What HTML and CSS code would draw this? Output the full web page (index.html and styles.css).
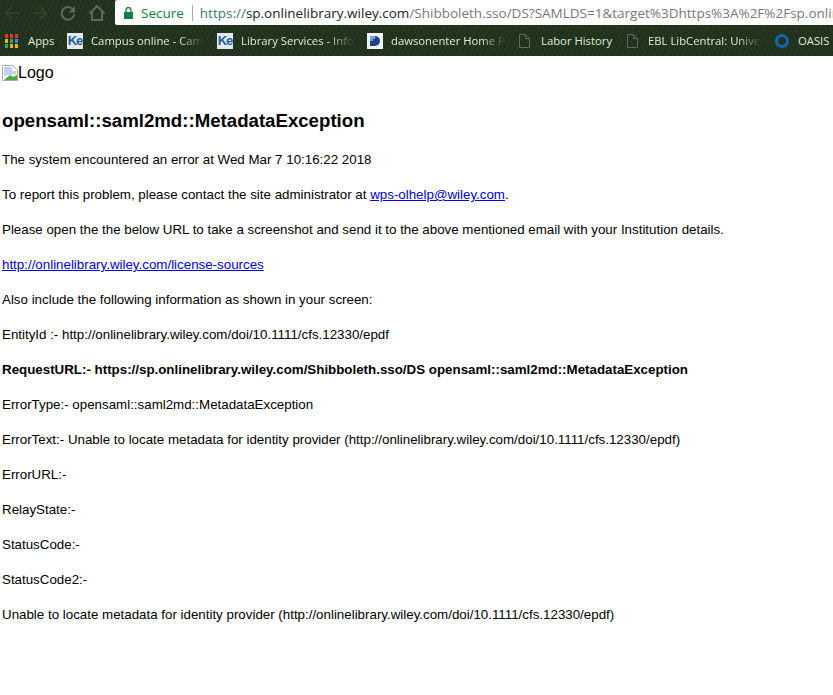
FILE: index.html
```html
<!DOCTYPE html>
<html lang="en">
<head>
<meta charset="utf-8">
<title>MetadataException</title>
<link rel="stylesheet" href="styles.css">
</head>
<body>
<header class="chrome">
  <div class="toolbar">
    <div class="nav">
      <svg class="nav-icon" width="16" height="16" viewBox="0 0 16 16"><path d="M15 8H2M8 2L2 8l6 6" fill="none" stroke="#34452f" stroke-width="1.500"/></svg>
      <svg class="nav-icon" width="16" height="16" viewBox="0 0 16 16"><path d="M1 8h13M8 2l6 6-6 6" fill="none" stroke="#34452f" stroke-width="1.500"/></svg>
      <svg class="nav-icon" width="16" height="16" viewBox="0 0 16 16"><path d="M13 4.500A6.300 6.300 0 1 0 14.300 9" fill="none" stroke="#62665f" stroke-width="2"/><path d="M15 1v6.500H8.500z" fill="#62665f"/></svg>
      <svg class="nav-icon" width="18" height="18" viewBox="0 0 18 18"><path d="M1.500 9.500L9 2l7.500 7.500M4 8v8h10V8" fill="none" stroke="#62665f" stroke-width="2"/></svg>
    </div>
    <div class="omnibox">
      <svg class="lock" width="9" height="12" viewBox="0 0 9 12"><path d="M0 5h9v7H0z" fill="#0b8043"/><path d="M2 5V3a2.500 2.500 0 0 1 5 0v2" fill="none" stroke="#0b8043" stroke-width="1.300"/></svg>
      <span class="secure">Secure</span>
      <span class="divider"></span>
      <span class="url"><span class="scheme">https://</span><span class="host">sp.onlinelibrary.wiley.com</span>/Shibboleth.sso/DS?SAMLDS=1&amp;target%3Dhttps%3A%2F%2Fsp.onlinelibrary.wiley.com</span>
    </div>
  </div>
  <nav class="bookmarks">
    <div class="bm bm-apps">
      <svg width="13" height="14" viewBox="0 0 13 14"><path fill="#e0392b" d="M0 0h3v4H0zM5 0h3v4H5zM10 0h3v4h-3z"/><path fill="#f4b400" d="M0 5h3v4H0z"/><path fill="#34a853" d="M5 5h3v4H5z"/><path fill="#4285f4" d="M10 5h3v4h-3z"/><path fill="#34a853" d="M0 10h3v4H0z"/><path fill="#f4b400" d="M5 10h3v4H5zM10 10h3v4h-3z"/></svg>
      <span>Apps</span>
    </div>
    <div class="bm bm-campus">
      <span class="ke">Ke</span><span class="bm-label">Campus online - Campus</span>
    </div>
    <div class="bm bm-library">
      <span class="ke">Ke</span><span class="bm-label">Library Services - Information</span>
    </div>
    <div class="bm bm-dawson">
      <svg width="16" height="16" viewBox="0 0 16 16"><path fill="#f4f6fa" d="M0 0h16v16H0z"/><path fill="#6fa8d8" d="M3 3h5v10H3z"/><path fill="#1d3f8f" d="M6 6h2a5 5 0 0 0 0-3 5 5 0 0 1 0 10H3V8h3z"/></svg>
      <span class="bm-label">dawsonenter Home Page</span>
    </div>
    <div class="bm bm-labor">
      <svg width="11" height="14" viewBox="0 0 11 14"><path d="M.5.500h6l4 4v9H.5zM6.500.500v4h4" fill="none" stroke="#62665f"/></svg>
      <span>Labor History</span>
    </div>
    <div class="bm bm-ebl">
      <svg width="11" height="14" viewBox="0 0 11 14"><path d="M.5.500h6l4 4v9H.5zM6.500.500v4h4" fill="none" stroke="#62665f"/></svg>
      <span class="bm-label">EBL LibCentral: University</span>
    </div>
    <div class="bm bm-oasis">
      <svg width="14" height="14" viewBox="0 0 14 14"><circle cx="7" cy="7" r="5.500" fill="none" stroke="#1565b0" stroke-width="3"/></svg>
      <span>OASIS</span>
    </div>
  </nav>
</header>
<main class="page">
  <div class="logo"><svg width="16" height="16" viewBox="0 0 16 16"><path d="M.5.500h10l5 5v10H.5z" fill="#fff" stroke="#a9a9a9"/><path d="M2 2h8v4h4v3L2 11z" fill="#bcd0f0"/><path d="M2 15l6-5 3 2 4-2v5z" fill="#4fa83d"/></svg><span>Logo</span></div>
  <h1>opensaml::saml2md::MetadataException</h1>
  <p>The system encountered an error at Wed Mar 7 10:16:22 2018</p>
  <p>To report this problem, please contact the site administrator at <a href="#">wps-olhelp@wiley.com</a>.</p>
  <p>Please open the the below URL to take a screenshot and send it to the above mentioned email with your Institution details.</p>
  <p><a href="#">http://onlinelibrary.wiley.com/license-sources</a></p>
  <p>Also include the following information as shown in your screen:</p>
  <p>EntityId :- http://onlinelibrary.wiley.com/doi/10.1111/cfs.12330/epdf</p>
  <p><strong>RequestURL:- https://sp.onlinelibrary.wiley.com/Shibboleth.sso/DS opensaml::saml2md::MetadataException</strong></p>
  <p>ErrorType:- opensaml::saml2md::MetadataException</p>
  <p>ErrorText:- Unable to locate metadata for identity provider (http://onlinelibrary.wiley.com/doi/10.1111/cfs.12330/epdf)</p>
  <p>ErrorURL:-</p>
  <p>RelayState:-</p>
  <p>StatusCode:-</p>
  <p>StatusCode2:-</p>
  <p>Unable to locate metadata for identity provider (http://onlinelibrary.wiley.com/doi/10.1111/cfs.12330/epdf)</p>
</main>
</body>
</html>
```
FILE: styles.css
```css
html, body {
  margin: 0;
  padding: 0;
  background: #fff;
  overflow: hidden;
}
body {
  width: 833px;
  height: 695px;
  font-family: "Liberation Sans", Arial, sans-serif;
  color: #000;
}
.chrome {
  height: 56px;
  background-color: #22331d;
  background-image:
    repeating-linear-gradient(63deg, rgba(255,255,255,.03) 0 1px, transparent 1px 4px),
    repeating-linear-gradient(117deg, rgba(0,0,0,.12) 0 1px, transparent 1px 5px);
  overflow: hidden;
}
.toolbar {
  display: flex;
  height: 25px;
}
.nav {
  width: 115px;
  flex: none;
  display: flex;
  align-items: center;
  padding-left: 4px;
  gap: 12px;
  box-sizing: border-box;
}
.nav-icon { flex: none; }
.omnibox {
  flex: 1;
  min-width: 0;
  background: #fff;
  border-radius: 2px 0 0 2px;
  display: flex;
  align-items: center;
  padding-left: 9px;
  font-family: "Open Sans", sans-serif;
  font-size: 13.5px;
  white-space: nowrap;
  overflow: hidden;
}
.lock { flex: none; }
.secure { color: #0b8043; margin-left: 8px; }
.divider { width: 1px; height: 16px; background: #aaa; margin: 0 7px 0 8px; flex: none; }
.url { color: #777; }
.scheme { color: #3a7a78; }
.host { color: #222; }
.bookmarks {
  height: 31px;
  display: flex;
  align-items: center;
  font-family: "Open Sans", sans-serif;
  font-size: 11.3px;
  color: #d8f0d0;
  white-space: nowrap;
  overflow: hidden;
}
.bm { display: flex; align-items: center; gap: 8px; flex: none; overflow: hidden; box-sizing: border-box; }
.bm-apps { width: 67px; padding-left: 5px; gap: 10px; }
.bm-campus { width: 150px; padding-right: 13px; }
.bm-library { width: 150px; padding-right: 13px; }
.bm-dawson { width: 152px; padding-right: 13px; }
.bm-labor { width: 108px; gap: 11px; }
.bm-ebl { width: 148px; gap: 10px; padding-right: 13px; }
.bm-oasis { gap: 9px; }
.bm-label {
  display: block;
  flex: 1;
  min-width: 0;
  overflow: hidden;
  -webkit-mask-image: linear-gradient(to right, #000 78%, transparent);
  mask-image: linear-gradient(to right, #000 78%, transparent);
}
.ke {
  flex: none;
  width: 16px;
  height: 16px;
  background: #e4e8ee;
  color: #1d5da8;
  font: bold 13px/16px "Liberation Sans", sans-serif;
  letter-spacing: -1px;
  text-align: center;
}
.page { padding: 8px 2px 0; }
.logo {
  display: flex;
  align-items: center;
  font-size: 16px;
  height: 18px;
}
h1 {
  font-size: 18.65px;
  line-height: 22px;
  margin: 28px 0 0;
}
p {
  font-size: 13.33px;
  line-height: 15px;
  margin: 20px 0 0;
}
a { color: #00e; text-decoration: underline; }
```
